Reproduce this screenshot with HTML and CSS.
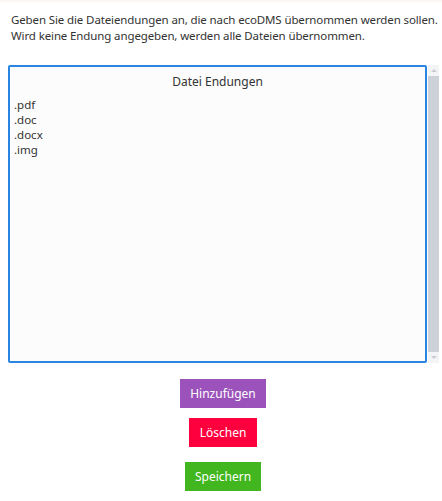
FILE: index.html
```html
<!DOCTYPE html>
<html lang="de">
<head>
<meta charset="utf-8">
<link rel="stylesheet" href="styles.css">
</head>
<body>
<div class="page">
  <p class="intro">Geben Sie die Dateiendungen an, die nach ecoDMS übernommen werden sollen.<br>Wird keine Endung angegeben, werden alle Dateien übernommen.</p>
  <div class="listwrap">
    <div class="listbox">
      <div class="listhead">Datei Endungen</div>
      <ul class="items">
        <li>.pdf</li>
        <li>.doc</li>
        <li>.docx</li>
        <li>.img</li>
      </ul>
    </div>
    <div class="scrollbar">
      <div class="arrow up"></div>
      <div class="track"></div>
      <div class="arrow down"></div>
    </div>
  </div>
  <div class="actions">
    <button class="btn btn-add">Hinzufügen</button>
    <button class="btn btn-del">Löschen</button>
    <button class="btn btn-save">Speichern</button>
  </div>
</div>
</body>
</html>
```
FILE: styles.css
```css
* { box-sizing: border-box; }
html, body { margin: 0; padding: 0; background: #ffffff; }
body {
  font-family: "Noto Sans", "Open Sans", sans-serif;
  font-size: 12px;
  color: #333333;
  border-top: 2px solid #f9f6f3;
  width: 442px;
  height: 501px;
  overflow: hidden;
}
.page { padding: 0 3px 0 8px; }
.intro {
  margin: 0;
  padding: 10px 0 0 3px;
  font-size: 11.5px;
  line-height: 16px;
  height: 55px;
  letter-spacing: -0.12px;
  white-space: nowrap;
}
.listwrap { display: flex; margin-top: 8px; height: 298px; }
.listbox {
  width: 419px;
  height: 298px;
  border: 2px solid #2a84e2;
  border-radius: 2px;
  background: #fcfcfc;
  padding: 7px 4px 6px;
}
.listhead { text-align: center; font-size: 12px; line-height: 16px; height: 23px; }
.items { list-style: none; margin: 0; padding: 0; font-size: 11.5px; line-height: 15px; }
.scrollbar {
  width: 11px;
  margin-left: 1px;
  display: flex;
  flex-direction: column;
  background: #f3f4f6;
}
.arrow { height: 11px; position: relative; }
.arrow::after {
  content: "";
  position: absolute;
  left: 3px;
  width: 0; height: 0;
  border-left: 3px solid transparent;
  border-right: 3px solid transparent;
}
.arrow.up::after { top: 4px; border-bottom: 3px solid #c8ccd3; }
.arrow.down::after { top: 4px; border-top: 3px solid #c8ccd3; }
.track { flex: 1; background: #cdd1d8; }
.actions {
  width: 430px;
  display: flex;
  flex-direction: column;
  align-items: center;
  padding-top: 16px;
}
.btn {
  border: 0;
  color: #ffffff;
  font-family: "Noto Sans", "Open Sans", sans-serif;
  font-size: 12px;
  height: 29px;
  padding: 0;
  cursor: pointer;
}
.btn-add { background: #9b53bb; width: 86px; }
.btn-del { background: #ff003e; width: 68px; margin-top: 10px; }
.btn-save { background: #41b61e; width: 76px; margin-top: 15px; }
```
